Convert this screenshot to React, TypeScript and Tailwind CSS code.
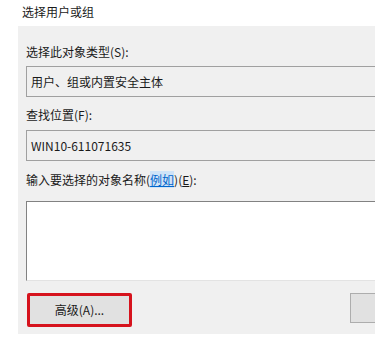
const font = { fontFamily: '"Noto Sans CJK SC", "Noto Sans", sans-serif' }

const App = () => {
  return (
    <div className="w-[375px] h-[337px] bg-white overflow-hidden text-[12px] leading-[16px] text-[#1a1a1a]" style={font}>
      {/* dialog title */}
      <div className="pl-[22px] pt-[4px] h-[26px]">选择用户或组</div>

      <div className="ml-[18px] h-[308px] bg-[#f0f0f0] pl-[8px] pt-[18px] flex flex-col">
        <div>选择此对象类型(S):</div>
        <div className="mt-[6px] h-[31px] border border-r-0 border-[#a0a0a0] flex items-center pl-[4px]">
          用户、组或内置安全主体
        </div>

        <div className="mt-[10px]">查找位置(F):</div>
        <div className="mt-[7px] h-[31px] border border-r-0 border-[#a0a0a0] flex items-center pl-[4px]">
          WIN10-611071635
        </div>

        <div className="mt-[11px]">
          输入要选择的对象名称(
          <span className="text-[#0066cc] underline bg-[#cfe3f7]">例如</span>
          )(<span className="underline">E</span>):
        </div>
        <div className="mt-[13px] h-[80px] bg-white border-t border-l border-[#828282] border-b border-b-[#e3e3e3]"></div>

        <div className="mt-[12px] flex items-start">
          <div className="ml-[1px] w-[105px] h-[34px] border-[3px] border-[#d6131d] rounded-[2px] bg-[#e1e1e1] flex items-center justify-center">
            高级(A)...
          </div>
          <div className="ml-auto w-[25px] h-[30px] border border-r-0 border-[#adadad] bg-[#e1e1e1]"></div>
        </div>
      </div>
    </div>
  )
}

export default App
